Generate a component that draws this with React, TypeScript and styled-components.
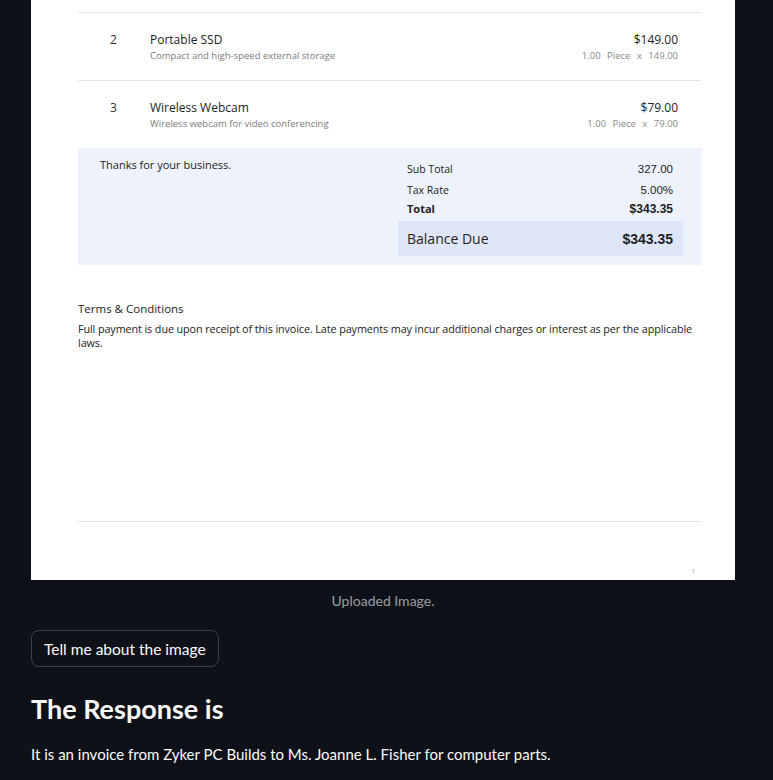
import React from "react";
import styled, { createGlobalStyle } from "styled-components";

const Global = createGlobalStyle`
  html, body { margin: 0; padding: 0; background: #0e1117; }
  body { font-family: Lato, "Noto Sans", sans-serif; color: #fafafa; }
`;

const Page = styled.div`
  width: 773px;
  height: 780px;
  overflow: hidden;
  padding: 0 38px 0 31px;
  box-sizing: border-box;
  display: flex;
  flex-direction: column;
`;

const Figure = styled.div`
  display: flex;
  flex-direction: column;
  align-items: center;
`;

const Sheet = styled.div`
  width: 704px;
  height: 580px;
  background: #ffffff;
  box-sizing: border-box;
  padding: 12px 34px 0 47px;
  display: flex;
  flex-direction: column;
  font-family: "Open Sans", "Noto Sans", sans-serif;
  color: #222;
`;

const ItemRow = styled.div`
  height: 68px;
  box-sizing: border-box;
  border-top: 1px solid #e6e6e6;
  display: grid;
  grid-template-columns: 72px 1fr auto;
  padding: 19px 23px 0 0;
`;

const ItemNo = styled.div`
  font-size: 12px;
  line-height: 16px;
  color: #333;
  padding-left: 32px;
`;

const ItemName = styled.div`
  font-size: 12px;
  line-height: 16px;
  color: #222;
`;

const ItemDesc = styled.div`
  font-size: 9.5px;
  line-height: 16px;
  color: #7a7a7a;
`;

const Amount = styled.div`
  text-align: right;
  font-size: 12px;
  line-height: 16px;
  color: #222;
`;

const Qty = styled.div`
  text-align: right;
  font-size: 9.5px;
  line-height: 16px;
  color: #8a8a8a;
  word-spacing: 4px;
`;

const Summary = styled.div`
  height: 117px;
  background: #eef2fd;
  display: grid;
  grid-template-columns: 320px 285px;
`;

const Thanks = styled.div`
  padding: 10px 0 0 22px;
  font-size: 11px;
  line-height: 14px;
  color: #222;
`;

const Totals = styled.div`
  display: flex;
  flex-direction: column;
  padding-top: 10px;
`;

const TotalLine = styled.div<{ $bold?: boolean }>`
  display: flex;
  justify-content: space-between;
  padding: 0 10px 0 9px;
  height: ${(p) => (p.$bold ? "17px" : "21px")};
  align-items: center;
  font-size: ${(p) => (p.$bold ? "11px" : "10.5px")};
  font-weight: ${(p) => (p.$bold ? 700 : 400)};
  color: #222;
`;

const TotalValue = styled.span<{ $bold?: boolean }>`
  font-family: "Liberation Sans", Arial, sans-serif;
  font-size: ${(p) => (p.$bold ? "12px" : "11.5px")};
  font-weight: ${(p) => (p.$bold ? 700 : 400)};
`;

const Balance = styled.div`
  margin-top: 4px;
  height: 35px;
  background: #e0e6fa;
  display: flex;
  justify-content: space-between;
  align-items: center;
  padding: 0 10px 0 9px;
  font-size: 14px;
  color: #1f1f1f;
`;

const BalanceValue = styled.span`
  font-family: "Liberation Sans", Arial, sans-serif;
  font-weight: 700;
  font-size: 14px;
`;

const Terms = styled.div`
  padding-top: 36px;
  display: flex;
  flex-direction: column;
  gap: 5px;
  height: 256px;
  box-sizing: border-box;
`;

const TermsTitle = styled.div`
  font-size: 11.5px;
  line-height: 16px;
  color: #222;
`;

const TermsText = styled.div`
  font-size: 10.8px;
  line-height: 14px;
  color: #222;
  letter-spacing: -0.1px;
`;

const FooterLine = styled.div`
  border-top: 1px solid #e6e6e6;
  flex: 1;
  display: flex;
  justify-content: flex-end;
  align-items: flex-end;
  padding: 0 6px 5px 0;
`;

const PageNo = styled.span`
  font-size: 6px;
  color: #999;
`;

const Caption = styled.div`
  margin-top: 12px;
  font-size: 14px;
  line-height: 18px;
  color: rgba(250, 250, 250, 0.6);
  text-align: center;
`;

const Button = styled.button`
  align-self: flex-start;
  margin-top: 20px;
  height: 37px;
  padding: 0 12px;
  background: transparent;
  color: #fafafa;
  border: 1px solid rgba(250, 250, 250, 0.2);
  border-radius: 8px;
  font-family: Lato, "Noto Sans", sans-serif;
  font-size: 15.5px;
  cursor: pointer;
`;

const Heading = styled.h3`
  margin: 24px 0 0;
  font-size: 27px;
  line-height: 36px;
  font-weight: 700;
  color: #fafafa;
`;

const Paragraph = styled.p`
  margin: 15px 0 0;
  font-size: 15px;
  line-height: 24px;
  color: #fafafa;
`;

const items = [
  { no: 2, name: "Portable SSD", desc: "Compact and high-speed external storage", amount: "$149.00", rate: "149.00" },
  { no: 3, name: "Wireless Webcam", desc: "Wireless webcam for video conferencing", amount: "$79.00", rate: "79.00" },
];

export default function App() {
  return (
    <>
      <Global />
      <Page>
        <Figure>
          <Sheet>
            {items.map((it) => (
              <ItemRow key={it.no}>
                <ItemNo>{it.no}</ItemNo>
                <div>
                  <ItemName>{it.name}</ItemName>
                  <ItemDesc>{it.desc}</ItemDesc>
                </div>
                <div>
                  <Amount>{it.amount}</Amount>
                  <Qty>1.00 Piece x {it.rate}</Qty>
                </div>
              </ItemRow>
            ))}
            <Summary>
              <Thanks>Thanks for your business.</Thanks>
              <Totals>
                <TotalLine>
                  <span>Sub Total</span>
                  <TotalValue>327.00</TotalValue>
                </TotalLine>
                <TotalLine>
                  <span>Tax Rate</span>
                  <TotalValue>5.00%</TotalValue>
                </TotalLine>
                <TotalLine $bold>
                  <span>Total</span>
                  <TotalValue $bold>$343.35</TotalValue>
                </TotalLine>
                <Balance>
                  <span>Balance Due</span>
                  <BalanceValue>$343.35</BalanceValue>
                </Balance>
              </Totals>
            </Summary>
            <Terms>
              <TermsTitle>Terms &amp; Conditions</TermsTitle>
              <TermsText>
                Full payment is due upon receipt of this invoice. Late payments may incur additional charges or interest as per the applicable laws.
              </TermsText>
            </Terms>
            <FooterLine>
              <PageNo>1</PageNo>
            </FooterLine>
          </Sheet>
          <Caption>Uploaded Image.</Caption>
        </Figure>
        <Button>Tell me about the image</Button>
        <Heading>The Response is</Heading>
        <Paragraph>It is an invoice from Zyker PC Builds to Ms. Joanne L. Fisher for computer parts.</Paragraph>
      </Page>
    </>
  );
}
